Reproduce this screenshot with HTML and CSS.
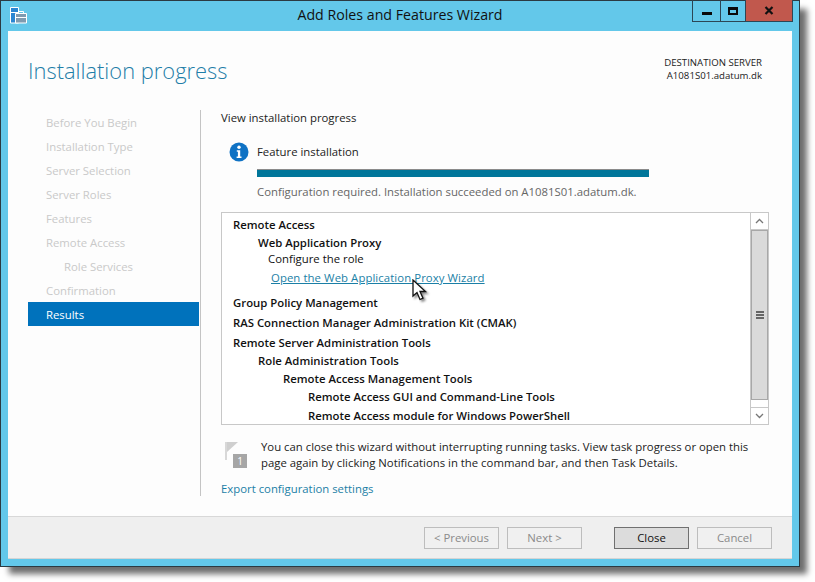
FILE: index.html
```html
<!DOCTYPE html>
<html lang="en">
<head>
<meta charset="utf-8">
<title>Add Roles and Features Wizard</title>
<link rel="stylesheet" href="styles.css">
</head>
<body>
<div class="window">
  <header class="titlebar">
    <div class="app-icon">
      <svg width="17" height="17" viewBox="0 0 17 17"><path d="M.5.500h8v15.500h-8z" fill="#2a86d2" stroke="#fff"/><path d="M1 5.500h7" stroke="#fff"/><path d="M5.500 6.500h11v9.500h-11z" fill="#7f9bb0" stroke="#fff"/><path d="M8.500 6V4.500h5V6" fill="none" stroke="#fff"/><path d="M6 10.500h10" stroke="#fff"/></svg>
    </div>
    <div class="title">Add Roles and Features Wizard</div>
    <div class="controls">
      <div class="ctl ctl-min"><span class="glyph-min"></span></div>
      <div class="ctl ctl-max"><span class="glyph-max"></span></div>
      <div class="ctl ctl-close"><svg width="10" height="9" viewBox="0 0 10 9"><path d="M1.500 1L8.500 8M8.500 1L1.500 8" stroke="#111" stroke-width="2.200" fill="none"/></svg></div>
    </div>
  </header>
  <div class="client">
    <div class="content">
      <div class="page-head">
        <h1 class="page-title">Installation progress</h1>
        <div class="dest"><div>DESTINATION SERVER</div><div>A1081S01.adatum.dk</div></div>
      </div>
      <div class="body">
        <nav class="nav">
          <div class="nav-item">Before You Begin</div>
          <div class="nav-item">Installation Type</div>
          <div class="nav-item">Server Selection</div>
          <div class="nav-item">Server Roles</div>
          <div class="nav-item">Features</div>
          <div class="nav-item">Remote Access</div>
          <div class="nav-item nav-sub">Role Services</div>
          <div class="nav-item">Confirmation</div>
          <div class="nav-item nav-active">Results</div>
        </nav>
        <main class="main">
          <div class="lead">View installation progress</div>
          <div class="feature">
            <svg class="info" width="20" height="20" viewBox="0 0 20 20"><circle cx="10" cy="10" r="9.500" fill="#0f72c4"/><circle cx="10" cy="5.200" r="1.700" fill="#fff"/><path d="M7.800 8.200h3.400v6.300h1.300v1.500H7.600v-1.500h1.300V9.700H7.800z" fill="#fff"/></svg>
            <div class="feature-label">Feature installation</div>
          </div>
          <div class="progress"></div>
          <div class="status">Configuration required. Installation succeeded on A1081S01.adatum.dk.</div>
          <div class="listbox">
            <div class="rows">
              <div class="row r1 b">Remote Access</div>
              <div class="row r2 b">Web Application Proxy</div>
              <div class="row r3">Configure the role</div>
              <div class="row r4"><a class="link-u" href="#">Open the Web Application Proxy Wizard</a></div>
              <div class="row r5 b">Group Policy Management</div>
              <div class="row r6 b">RAS Connection Manager Administration Kit (CMAK)</div>
              <div class="row r6 b">Remote Server Administration Tools</div>
              <div class="row r7 b">Role Administration Tools</div>
              <div class="row r8 b">Remote Access Management Tools</div>
              <div class="row r9 b">Remote Access GUI and Command-Line Tools</div>
              <div class="row r9 r10 b">Remote Access module for Windows PowerShell</div>
            </div>
            <div class="scrollbar">
              <div class="sb-btn"><svg width="9" height="6" viewBox="0 0 9 6"><path d="M1 5L4.500 1.500L8 5" fill="none" stroke="#777" stroke-width="1.300"/></svg></div>
              <div class="sb-thumb"><span class="grip"></span></div>
              <div class="sb-gap"></div>
              <div class="sb-btn sb-down"><svg width="9" height="6" viewBox="0 0 9 6"><path d="M1 1L4.500 4.500L8 1" fill="none" stroke="#777" stroke-width="1.300"/></svg></div>
            </div>
          </div>
          <div class="note">
            <svg class="flag" width="24" height="28" viewBox="0 0 24 28"><path d="M1 1v18" stroke="#d8d8d8" stroke-width="2"/><path d="M2 1h11l-11 10z" fill="#cfcfcf"/><rect x="8" y="13" width="14" height="14" fill="#a6a6a6"/></svg>
            <span class="flag-num">1</span>
            <div class="note-text">You can close this wizard without interrupting running tasks. View task progress or open this<br>page again by clicking Notifications in the command bar, and then Task Details.</div>
          </div>
          <a class="export" href="#">Export configuration settings</a>
        </main>
      </div>
    </div>
    <footer class="footer">
      <div class="btn">&lt; Previous</div>
      <div class="btn btn-next">Next &gt;</div>
      <div class="btn btn-primary">Close</div>
      <div class="btn">Cancel</div>
    </footer>
  </div>
  <svg class="cursor" width="17" height="23" viewBox="0 0 17 23"><path d="M1 1v16l4-3.500 3 7 3-1.300-3-6.700h5.500z" fill="#fff" stroke="#111" stroke-width="1.300"/></svg>
</div>
</body>
</html>
```
FILE: styles.css
```css
* { box-sizing: border-box; }
html, body { margin: 0; padding: 0; background: #fff; }
body { width: 815px; height: 582px; overflow: hidden; font-family: "Open Sans", "Noto Sans", sans-serif; font-size: 11.35px; color: #1a1a1a; }
.window { position: relative; width: 800px; height: 567px; background: #63c8ea; border: 1px solid #2b3a42; padding: 0 7px 7px; display: flex; flex-direction: column; box-shadow: 8px 8px 6px -1px #6e6e6e; }
.titlebar { height: 30px; flex: none; display: flex; position: relative; }
.app-icon { position: absolute; left: 2px; top: 6px; line-height: 0; }
.title { width: 100%; text-align: center; font-size: 14.2px; line-height: 28px; color: #111; }
.controls { position: absolute; right: -1px; top: -1px; display: flex; height: 22px; border: 1px solid #2c4655; border-top: 0; }
.ctl { display: flex; align-items: center; justify-content: center; height: 21px; }
.ctl-min { width: 28px; border-right: 1px solid #2c4655; }
.ctl-max { width: 25px; border-right: 1px solid #2c4655; }
.ctl-close { width: 46px; background: #c1584d; }
.glyph-min { width: 10px; height: 3px; background: #0a0a0a; margin-top: 5px; }
.glyph-max { width: 10px; height: 8px; border: 2px solid #0a0a0a; border-top-width: 3px; }
.client { flex: 1; background: #fdfdfd; display: flex; flex-direction: column; min-height: 0; }
.content { flex: 1; padding: 0 0 0 20px; min-height: 0; }
.page-head { height: 79px; display: flex; justify-content: space-between; }
.page-title { margin: 24px 0 0; font-size: 21.9px; font-weight: 300; line-height: 32px; color: #1f7ea8; }
.dest { padding: 25px 30px 0 0; text-align: right; font-size: 9.65px; line-height: 13px; color: #222; }
.body { display: flex; height: 406px; }
.nav { width: 172px; flex: none; padding-top: 1px; }
.nav-item { height: 24px; line-height: 24px; padding-left: 18px; color: #c9c9c9; }
.nav-sub { padding-left: 36px; }
.nav-active { background: #0072bc; color: #fff; margin-top: -1px; padding-top: 1px; height: 24px; width: 171px; }
.main { flex: 1; border-left: 1px solid #c4c4c4; padding-left: 20px; height: 386px; }
.lead { line-height: 16px; height: 16px; margin-bottom: 16px; color: #222; }
.feature { display: flex; align-items: center; height: 20px; padding-left: 8px; }
.info { flex: none; }
.feature-label { margin: -2px 0 0 8px; color: #222; }
.progress { width: 392px; height: 8px; margin: 7px 0 0 36px; background: #00769a; border-top: 1px solid #8b8b8b; }
.status { margin: 7px 0 0 36px; line-height: 16px; height: 16px; color: #666; }
.listbox { margin-top: 12px; width: 548px; height: 213px; border: 1px solid #c8c8c8; background: #fff; display: flex; position: relative; }
.rows { flex: 1; min-width: 0; padding-top: 3px; }
.row { height: 18px; line-height: 18px; white-space: nowrap; color: #111; }
.b { font-weight: 600; }
.r1 { padding-left: 11px; }
.r2 { padding-left: 36px; }
.r3 { padding-left: 46px; height: 16px; line-height: 14px; }
.r4 { padding-left: 49px; margin-top: 1px; height: 20px; line-height: 18px; }
.r5 { padding-left: 11px; margin-top: 4px; height: 20px; line-height: 20px; }
.r6 { padding-left: 11px; height: 20px; line-height: 20px; }
.r7 { padding-left: 36px; margin-top: -1px; }
.r8 { padding-left: 61px; }
.r9 { padding-left: 86px; }
.r10 { margin-top: 1px; }
.link-u { color: #1b7fa6; text-decoration: underline; letter-spacing: .08px; }
.scrollbar { width: 18px; flex: none; border-left: 1px solid #c8c8c8; display: flex; flex-direction: column; }
.sb-btn { height: 17px; flex: none; display: flex; align-items: center; justify-content: center; border-bottom: 1px solid #c8c8c8; }
.sb-down { border-bottom: 0; border-top: 1px solid #c8c8c8; }
.sb-thumb { height: 170px; flex: none; background: #dadada; border: 1px solid #a8a8a8; display: flex; align-items: center; justify-content: center; }
.grip { width: 8px; height: 8px; background: repeating-linear-gradient(#666 0 2px, #ddd 2px 3px); }
.sb-gap { flex: 1; }
.note { position: relative; margin-top: 15px; height: 32px; padding: 0 0 0 40px; display: flex; }
.flag { position: absolute; left: 4px; top: 1px; }
.flag-num { position: absolute; left: 12px; top: 15px; width: 14px; text-align: center; font-size: 10px; line-height: 13px; color: #fff; }
.note-text { line-height: 16px; color: #222; white-space: nowrap; margin-top: -1px; }
.export { display: block; margin-top: 9px; line-height: 16px; color: #1b7fa6; text-decoration: none; }
.footer { height: 43px; flex: none; background: #efefef; border-top: 1px solid #d8d8d8; border-bottom: 1px solid #d5d5d5; display: flex; align-items: center; padding: 0 20px 0 416px; gap: 8px; }
.btn { width: 75px; height: 22px; line-height: 20px; text-align: center; border: 1px solid #bdbdbd; background: #f0f0f0; color: #8a8a8a; }
.btn-next { margin-right: 24px; }
.btn-primary { background: #dcdcdc; border-color: #707070; color: #111; }
.cursor { position: absolute; left: 411px; top: 278px; filter: drop-shadow(2px 2px 1px rgba(0,0,0,.45)); }
```
